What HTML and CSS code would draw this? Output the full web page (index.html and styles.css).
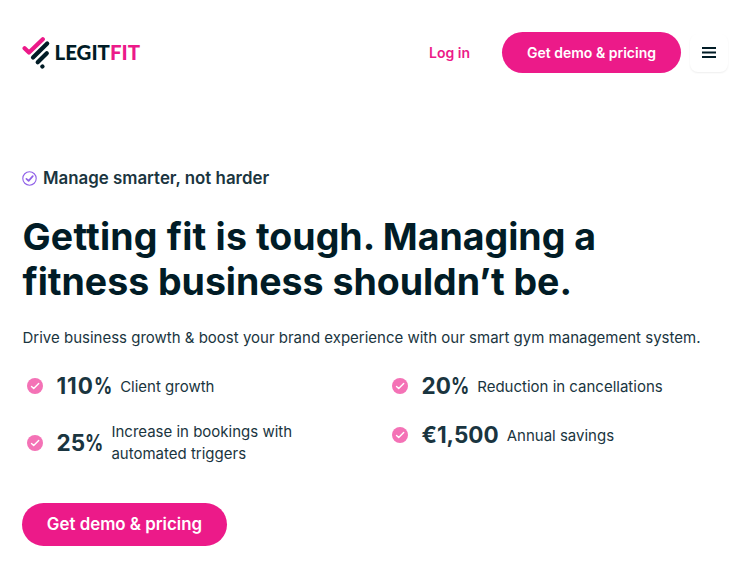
FILE: index.html
```html
<!DOCTYPE html>
<html lang="en">
<head>
    <meta charset="UTF-8">
    <meta name="viewport" content="width=device-width, initial-scale=1.0">
    <title>LegitFit</title>
    <link rel="stylesheet" href="styles.css">
</head>
<body>
    <header class="navbar">
        <a class="logo" href="#" aria-label="LegitFit">
            <svg width="120" height="36" viewBox="0 0 120 36">
                <g fill="none" stroke-width="4.2" stroke-linecap="round">
                    <path d="M2.6 13.2L7 17.6L20.8 4.2" stroke="#ec1a89" stroke-linejoin="round"/>
                    <path d="M11 22.6L25.2 8.4M15.7 27.3L24.8 18.2M20.3 31.6L20.5 31.4" stroke="#011c26"/>
                </g>
                <text class="logo-text" x="32.5" y="25" textLength="85.5" lengthAdjust="spacingAndGlyphs">LEGIT<tspan class="logo-accent">FIT</tspan></text>
            </svg>
        </a>
        <nav class="nav-actions">
            <a class="login" href="#">Log in</a>
            <a class="button button-nav" href="#">Get demo &amp; pricing</a>
            <button class="menu-button" aria-label="Menu">
                <svg width="14" height="12" viewBox="0 0 14 12">
                    <path d="M0 1h14M0 5.5h14M0 10h14" stroke="#011c26" stroke-width="2"/>
                </svg>
            </button>
        </nav>
    </header>

    <main class="hero">
        <div class="tagline">
            <svg width="15" height="15" viewBox="0 0 15 15" fill="none" stroke="#9061e8">
                <circle cx="7.5" cy="7.5" r="6.7" stroke-width="1.1"/>
                <path d="M4.4 7.9L6.6 9.9L10.8 5.1" stroke-width="1.7" stroke-linecap="round" stroke-linejoin="round"/>
            </svg>
            <span>Manage smarter, not harder</span>
        </div>
        <h1><span class="loose">Getting fit is</span> tough. Managing a<br>fitness business shouldn’t be.</h1>
        <p class="intro">Drive business growth &amp; boost your brand experience with our smart gym management system.</p>

        <div class="stats">
            <div class="stats-column">
                <div class="stat">
                    <svg class="check" viewBox="0 0 16 16"><circle cx="8" cy="8" r="8"/><path d="M4.5 8.4L6.7 10.6L11.7 5.4"/></svg>
                    <strong class="wide">110<i class="percent">%</i></strong>
                    <span>Client growth</span>
                </div>
                <div class="stat">
                    <svg class="check" viewBox="0 0 16 16"><circle cx="8" cy="8" r="8"/><path d="M4.5 8.4L6.7 10.6L11.7 5.4"/></svg>
                    <strong>25<i class="percent">%</i></strong>
                    <span class="two-lines">Increase in bookings with<br>automated triggers</span>
                </div>
            </div>
            <div class="stats-column">
                <div class="stat">
                    <svg class="check" viewBox="0 0 16 16"><circle cx="8" cy="8" r="8"/><path d="M4.5 8.4L6.7 10.6L11.7 5.4"/></svg>
                    <strong>20<i class="percent">%</i></strong>
                    <span>Reduction in cancellations</span>
                </div>
                <div class="stat">
                    <svg class="check" viewBox="0 0 16 16"><circle cx="8" cy="8" r="8"/><path d="M4.5 8.4L6.7 10.6L11.7 5.4"/></svg>
                    <strong>€1,500</strong>
                    <span>Annual savings</span>
                </div>
            </div>
        </div>

        <a class="button button-hero" href="#">Get demo &amp; pricing</a>
    </main>
</body>
</html>
```

FILE: styles.css
```css
* {
    box-sizing: border-box;
}

body {
    margin: 0;
    padding: 0 22px;
    background-color: #fff;
    color: #1a3540;
    font-family: Inter, "Liberation Sans", sans-serif;
    font-size: 15px;
}

a {
    text-decoration: none;
}

.navbar {
    display: flex;
    align-items: center;
    justify-content: space-between;
    height: 105px;
}

.logo svg {
    display: block;
}

.logo-text {
    font-family: Lato, sans-serif;
    font-size: 20.5px;
    font-weight: 900;
    fill: #011c26;
}

.logo-accent {
    fill: #ec1a89;
}

.nav-actions {
    display: flex;
    align-items: center;
}

.login {
    margin-right: 32px;
    color: #ec1a89;
    font-size: 14px;
    font-weight: 600;
}

.button {
    display: inline-flex;
    align-items: center;
    justify-content: center;
    border-radius: 30px;
    background-color: #ec1a89;
    color: #fff;
    font-weight: 600;
}

.button-nav {
    width: 179px;
    height: 41px;
    font-size: 14px;
}

.menu-button {
    display: flex;
    align-items: center;
    justify-content: center;
    width: 38px;
    height: 38px;
    margin-left: 9px;
    padding: 0;
    border: none;
    border-radius: 8px;
    background-color: #fff;
    box-shadow: 0 1px 2px rgba(0, 0, 0, 0.07);
}

.hero {
    padding-top: 62px;
}

.tagline {
    display: flex;
    align-items: center;
    gap: 6px;
    height: 22px;
    font-size: 16.875px;
    font-weight: 600;
}

h1 {
    margin: 25px 0 0;
    padding-left: 0.5px;
    color: #011c26;
    font-size: 37.5px;
    font-weight: 700;
    line-height: 45px;
    letter-spacing: -0.03px;
}

h1 .loose {
    letter-spacing: 0.2px;
}

.intro {
    margin: 23px 0 0;
    padding-left: 0.5px;
    line-height: 22.5px;
}

.stats {
    display: grid;
    grid-template-columns: 365px 1fr;
    margin-top: 22px;
}

.stats-column {
    display: flex;
    flex-direction: column;
    gap: 19px;
}

.stat {
    display: flex;
    align-items: center;
    min-height: 30px;
    padding-left: 5px;
    line-height: 22.5px;
}

.stat strong {
    margin: 0 8px 0 13.5px;
    font-size: 22.5px;
    font-weight: 700;
}

.stat strong.wide {
    letter-spacing: 0.9px;
}

.stat span {
    padding-top: 1px;
}

.stat .two-lines {
    padding-top: 0;
}

.percent {
    display: inline-block;
    margin-right: -4.5px;
    font-style: normal;
    letter-spacing: 0;
    transform: scaleX(0.8);
    transform-origin: left;
}

.check {
    width: 16px;
    height: 16px;
    margin-bottom: 1px;
}

.check circle {
    fill: #f472b6;
}

.check path {
    fill: none;
    stroke: #fff;
    stroke-width: 1.4;
    stroke-linecap: round;
    stroke-linejoin: round;
}

.button-hero {
    width: 205px;
    height: 43px;
    margin-top: 37px;
    font-size: 16.875px;
}
```
